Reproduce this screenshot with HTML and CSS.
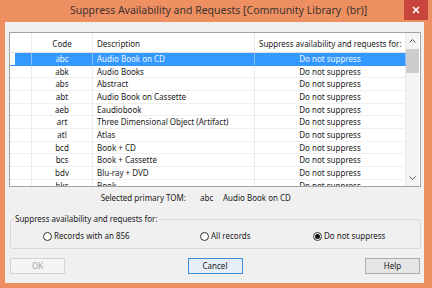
FILE: index.html
```html
<!DOCTYPE html>
<html lang="en">
<head>
    <meta charset="UTF-8">
    <title>Suppress Availability and Requests</title>
    <link rel="stylesheet" href="styles.css">
</head>
<body>
    <div class="window">
        <div class="titlebar">
            <span></span>
            <h1 class="title">Suppress Availability and Requests [Community Library&nbsp; (br)]</h1>
            <span class="close-btn">
                <svg width="8" height="8" viewBox="0 0 8 8"><path d="M1 1 L7 7 M7 1 L1 7" stroke="#fff" stroke-width="1.6"/></svg>
            </span>
        </div>

        <div class="client">
            <div class="grid-box">
                <div class="grid">
                    <div class="row head">
                        <div class="cell"></div>
                        <div class="cell center">Code</div>
                        <div class="cell">Description</div>
                        <div class="cell center">Suppress availability and requests for:</div>
                    </div>
                    <div class="row selected">
                        <div class="cell rh"></div>
                        <div class="cell center">abc</div>
                        <div class="cell">Audio Book on CD</div>
                        <div class="cell center">Do not suppress</div>
                    </div>
                    <div class="row">
                        <div class="cell rh"></div>
                        <div class="cell center">abk</div>
                        <div class="cell">Audio Books</div>
                        <div class="cell center">Do not suppress</div>
                    </div>
                    <div class="row">
                        <div class="cell rh"></div>
                        <div class="cell center">abs</div>
                        <div class="cell">Abstract</div>
                        <div class="cell center">Do not suppress</div>
                    </div>
                    <div class="row">
                        <div class="cell rh"></div>
                        <div class="cell center">abt</div>
                        <div class="cell">Audio Book on Cassette</div>
                        <div class="cell center">Do not suppress</div>
                    </div>
                    <div class="row">
                        <div class="cell rh"></div>
                        <div class="cell center">aeb</div>
                        <div class="cell">Eaudiobook</div>
                        <div class="cell center">Do not suppress</div>
                    </div>
                    <div class="row">
                        <div class="cell rh"></div>
                        <div class="cell center">art</div>
                        <div class="cell">Three Dimensional Object (Artifact)</div>
                        <div class="cell center">Do not suppress</div>
                    </div>
                    <div class="row">
                        <div class="cell rh"></div>
                        <div class="cell center">atl</div>
                        <div class="cell">Atlas</div>
                        <div class="cell center">Do not suppress</div>
                    </div>
                    <div class="row">
                        <div class="cell rh"></div>
                        <div class="cell center">bcd</div>
                        <div class="cell">Book + CD</div>
                        <div class="cell center">Do not suppress</div>
                    </div>
                    <div class="row">
                        <div class="cell rh"></div>
                        <div class="cell center">bcs</div>
                        <div class="cell">Book + Cassette</div>
                        <div class="cell center">Do not suppress</div>
                    </div>
                    <div class="row">
                        <div class="cell rh"></div>
                        <div class="cell center">bdv</div>
                        <div class="cell">Blu-ray + DVD</div>
                        <div class="cell center">Do not suppress</div>
                    </div>
                    <div class="row">
                        <div class="cell rh"></div>
                        <div class="cell center">bks</div>
                        <div class="cell">Book</div>
                        <div class="cell center">Do not suppress</div>
                    </div>
                </div>
                <div class="scrollbar">
                    <span class="arrow">
                        <svg width="7" height="4" viewBox="0 0 7 4"><path d="M0.5 3.5 L3.5 0.5 L6.5 3.5" fill="none" stroke="#555" stroke-width="1"/></svg>
                    </span>
                    <span class="track"><span class="thumb"></span></span>
                    <span class="arrow">
                        <svg width="7" height="4" viewBox="0 0 7 4"><path d="M0.5 0.5 L3.5 3.5 L6.5 0.5" fill="none" stroke="#555" stroke-width="1"/></svg>
                    </span>
                </div>
            </div>

            <div class="selected-tom">
                <span class="tom-label">Selected primary TOM:</span>
                <span class="tom-code">abc</span>
                <span>Audio Book on CD</span>
            </div>

            <fieldset class="group">
                <legend>Suppress availability and requests for:</legend>
                <div class="radios">
                    <div class="radio"><span class="circle"></span>Records with an 856</div>
                    <div class="radio"><span class="circle"></span>All records</div>
                    <div class="radio"><span class="circle checked"></span>Do not suppress</div>
                </div>
            </fieldset>

            <div class="buttons">
                <span class="btn disabled">OK</span>
                <span class="btn default">Cancel</span>
                <span class="btn">Help</span>
            </div>
        </div>
    </div>
</body>
</html>
```

FILE: styles.css
```css
body {
    margin: 0;
    padding: 0;
    font-family: "Noto Sans", "Segoe UI", sans-serif;
    font-size: 8px;
    color: #1a1a1a;
    background-color: #ee8f61;
}

.window {
    width: 432px;
    height: 288px;
    box-sizing: border-box;
    padding: 0 8px 5px 5px;
    display: flex;
    flex-direction: column;
}

.titlebar {
    height: 22px;
    display: grid;
    grid-template-columns: 1fr auto 1fr;
    margin-right: -8px;
}

.title {
    margin: 0;
    font-size: 10.5px;
    font-weight: normal;
    line-height: 20px;
    color: #3a3330;
    white-space: nowrap;
}

.close-btn {
    justify-self: end;
    width: 24px;
    height: 20px;
    margin-right: 4px;
    background-color: #c7453b;
    display: flex;
    align-items: center;
    justify-content: center;
}

.client {
    flex: 1;
    background-color: #f0f0f0;
    padding: 10px 3px 0 4px;
    display: flex;
    flex-direction: column;
}

/* data grid */
.grid-box {
    height: 155px;
    box-sizing: border-box;
    border: 1px solid #a3a3a3;
    background-color: #fff;
    display: flex;
    overflow: hidden;
}

.grid {
    flex: 1;
    overflow: hidden;
}

.row {
    display: grid;
    grid-template-columns: 22px 61px 162px 1fr;
    height: 12.67px;
    box-sizing: border-box;
    border-bottom: 1px solid #efefef;
    line-height: 11.67px;
}

.row.head {
    height: 20px;
    line-height: 21px;
    border-bottom-color: #e3e3e3;
}

.cell {
    padding: 0 4px;
    border-right: 1px solid #ececec;
    white-space: nowrap;
    overflow: hidden;
}

.cell.center {
    text-align: center;
}

.row.selected {
    background-color: #3399ff;
    color: #eef6ff;
    border-bottom-color: #3399ff;
}

.row.selected .cell {
    border-right-color: #86c0fb;
}

.row.selected .rh {
    box-shadow: inset 5px 0 0 #fff;
}

.scrollbar {
    width: 13px;
    margin-right: 1px;
    display: flex;
    flex-direction: column;
    background-color: #f4f4f4;
}

.arrow {
    height: 16px;
    display: flex;
    align-items: center;
    justify-content: center;
}

.track {
    flex: 1;
}

.thumb {
    display: block;
    height: 24px;
    background-color: #cdcdcd;
}

/* selected TOM line */
.selected-tom {
    display: grid;
    grid-template-columns: 177px 37px auto;
    margin-top: 5px;
    line-height: 12px;
}

.tom-label {
    text-align: right;
}

.tom-code {
    padding-left: 14px;
}

/* group box */
.group {
    margin: 9px 0 0 1px;
    padding: 0 0 6px 0;
    border: 1px solid #d9d9d9;
    border-radius: 2px;
    min-width: 0;
}

.group legend {
    margin-left: 3px;
    padding: 0 1px;
    line-height: 12px;
}

.radios {
    display: grid;
    grid-template-columns: 157px 113px auto;
    padding: 5px 0 0 32px;
    line-height: 12px;
}

.radio {
    display: flex;
    align-items: center;
    gap: 2px;
}

.circle {
    width: 9px;
    height: 9px;
    box-sizing: border-box;
    border: 1px solid #333;
    border-radius: 50%;
    background-color: #fff;
    display: flex;
    align-items: center;
    justify-content: center;
}

.circle.checked::after {
    content: "";
    width: 5px;
    height: 5px;
    border-radius: 50%;
    background-color: #111;
}

/* buttons */
.buttons {
    display: flex;
    justify-content: space-between;
    margin: 9px 1px 0 1px;
}

.btn {
    width: 55px;
    height: 16px;
    box-sizing: border-box;
    border: 1px solid #acacac;
    background-color: #e5e5e5;
    text-align: center;
    line-height: 14px;
}

.btn.default {
    border-color: #3c8ce0;
    background-color: #e6eef6;
}

.btn.disabled {
    color: #a3a3a3;
    border-color: #d4d4d4;
    background-color: #f4f4f4;
}
```
